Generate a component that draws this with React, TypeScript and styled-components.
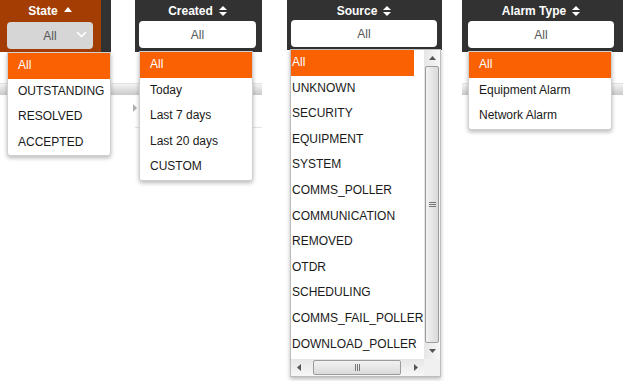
import styled, { createGlobalStyle } from 'styled-components';

const GlobalStyle = createGlobalStyle`
  html, body {
    margin: 0;
    padding: 0;
    background: #ffffff;
    font-family: "Liberation Sans", Arial, sans-serif;
  }
`;

const Page = styled.div`
  display: flex;
  align-items: flex-start;
  width: 623px;
  height: 381px;
  overflow: hidden;
`;

const Panel = styled.div<{ $width: number; $gap?: number }>`
  position: relative;
  flex: none;
  width: ${({ $width }) => $width}px;
  height: 381px;
  margin-left: ${({ $gap }) => $gap || 0}px;
`;

const Header = styled.div<{ $width?: number; $height: number }>`
  display: flex;
  width: ${({ $width }) => ($width ? `${$width}px` : '100%')};
  height: ${({ $height }) => $height}px;
  background: #323232;
`;

const HeaderCell = styled.div<{ $bg?: string; $width?: number; $padLeft: number; $padRight: number }>`
  display: flex;
  flex-direction: column;
  flex: ${({ $width }) => ($width ? 'none' : '1')};
  width: ${({ $width }) => ($width ? `${$width}px` : 'auto')};
  padding: 4px ${({ $padRight }) => $padRight}px 0 ${({ $padLeft }) => $padLeft}px;
  box-sizing: border-box;
  background: ${({ $bg }) => $bg || '#323232'};
`;

const Title = styled.div`
  display: flex;
  align-items: center;
  justify-content: center;
  gap: 6px;
  height: 14px;
  color: #ffffff;
  font-size: 12px;
  font-weight: 700;
  line-height: 14px;
`;

const SelectBox = styled.div<{ $grey?: boolean; $top: number }>`
  position: relative;
  display: flex;
  align-items: center;
  justify-content: center;
  height: 27px;
  margin-top: ${({ $top }) => $top}px;
  border-radius: 4px;
  background: ${({ $grey }) => ($grey ? '#d6d6d6' : '#ffffff')};
  color: #555555;
  font-size: 12px;
`;

const Chevron = styled.svg`
  position: absolute;
  right: 6px;
  top: 9px;
`;

const Band = styled.div`
  height: 11px;
  margin-top: 31px;
  background: linear-gradient(#f4f4f4, #c9c9c9);
  border-top: 1px solid #e2e2e2;
`;

const RowLine = styled.div`
  height: 1px;
  margin-top: 32px;
  background: #e4e4e4;
`;

const Expander = styled.div`
  position: absolute;
  left: -2px;
  top: 104px;
  width: 0;
  height: 0;
  border-top: 4px solid transparent;
  border-bottom: 4px solid transparent;
  border-left: 4px solid #b0b0b0;
`;

const Menu = styled.div<{ $left: number; $top: number; $width: number }>`
  position: absolute;
  left: ${({ $left }) => $left}px;
  top: ${({ $top }) => $top}px;
  width: ${({ $width }) => $width}px;
  box-sizing: border-box;
  background: #ffffff;
  border: 1px solid #d0d0d0;
  border-radius: 0 0 3px 3px;
  box-shadow: 0 2px 4px rgba(0, 0, 0, 0.28);
`;

const Item = styled.div<{ $active?: boolean; $pad: number; $width?: number }>`
  height: 25.6px;
  line-height: 25.6px;
  padding-left: ${({ $pad }) => $pad}px;
  width: ${({ $width }) => ($width ? `${$width}px` : 'auto')};
  box-sizing: border-box;
  white-space: nowrap;
  font-size: 12px;
  color: ${({ $active }) => ($active ? '#ffffff' : '#1a1a1a')};
  background: ${({ $active }) => ($active ? '#fa6103' : 'transparent')};
`;

const ListBox = styled.div`
  position: absolute;
  left: 3px;
  top: 49px;
  width: 151px;
  height: 328px;
  box-sizing: border-box;
  display: flex;
  flex-direction: column;
  background: #ffffff;
  border: 1px solid #bdbdbd;
  box-shadow: 0 2px 4px rgba(0, 0, 0, 0.28);
`;

const ListMain = styled.div`
  display: flex;
  flex: 1;
  min-height: 0;
`;

const Options = styled.div`
  flex: 1;
  overflow: hidden;
`;

const VScroll = styled.div`
  display: flex;
  flex-direction: column;
  width: 16px;
  background: linear-gradient(90deg, #e6e6e6, #f7f7f7);
`;

const HScroll = styled.div`
  display: flex;
  height: 17px;
  background: linear-gradient(#e6e6e6, #f7f7f7);
`;

const Arrow = styled.div`
  display: flex;
  align-items: center;
  justify-content: center;
  flex: none;
  width: 16px;
  height: 16px;
`;

const VThumb = styled.div`
  flex: 1;
  margin: 0 1px;
  display: flex;
  align-items: center;
  justify-content: center;
  border: 1px solid #9b9b9b;
  border-radius: 2px;
  background: linear-gradient(90deg, #f2f2f2, #dadada);
`;

const HThumb = styled.div`
  display: flex;
  align-items: center;
  justify-content: center;
  width: 86px;
  margin: 1px 0 1px 6px;
  border: 1px solid #9b9b9b;
  border-radius: 2px;
  background: linear-gradient(#f2f2f2, #dadada);
`;

const Spacer = styled.div`
  flex: 1;
`;

const Corner = styled.div`
  width: 16px;
  background: #f0f0f0;
`;

const SortBoth = () => (
  <svg width="8" height="10" viewBox="0 0 8 10">
    <path d="M0 4 L4 0 L8 4 Z M0 6 L8 6 L4 10 Z" fill="#ffffff" />
  </svg>
);

const SortUp = () => (
  <svg width="8" height="5" viewBox="0 0 8 5" style={{ marginTop: -3 }}>
    <path d="M0 5 L4 0 L8 5 Z" fill="#ffffff" />
  </svg>
);

const Tri = ({ dir }: { dir: 'up' | 'down' | 'left' | 'right' }) => {
  const d = {
    up: 'M0 4 L3.5 0 L7 4 Z',
    down: 'M0 0 L7 0 L3.5 4 Z',
    left: 'M4 0 L4 7 L0 3.5 Z',
    right: 'M0 0 L4 3.5 L0 7 Z',
  }[dir];
  const vertical = dir === 'up' || dir === 'down';
  return (
    <svg width={vertical ? 7 : 4} height={vertical ? 4 : 7} viewBox={vertical ? '0 0 7 4' : '0 0 4 7'}>
      <path d={d} fill="#555555" />
    </svg>
  );
};

const Grip = ({ horizontal }: { horizontal?: boolean }) => (
  <svg width="7" height="7" viewBox="0 0 7 7" style={horizontal ? { transform: 'rotate(90deg)' } : undefined}>
    <path d="M0 1.5 H7 M0 3.5 H7 M0 5.5 H7" stroke="#777777" strokeWidth="1" />
  </svg>
);

const sources = [
  'All', 'UNKNOWN', 'SECURITY', 'EQUIPMENT', 'SYSTEM', 'COMMS_POLLER', 'COMMUNICATION',
  'REMOVED', 'OTDR', 'SCHEDULING', 'COMMS_FAIL_POLLER', 'DOWNLOAD_POLLER',
];

export default function App() {
  return (
    <>
      <GlobalStyle />
      <Page>
        {/* State */}
        <Panel $width={135}>
          <Header $width={111} $height={52}>
            <HeaderCell $bg="#a43d03" $width={101} $padLeft={7} $padRight={8}>
              <Title>
                State <SortUp />
              </Title>
              <SelectBox $grey $top={4}>
                All
                <Chevron width="11" height="7" viewBox="0 0 11 7">
                  <path d="M1 1 L5.5 5.5 L10 1" fill="none" stroke="#ffffff" strokeWidth="1.6" />
                </Chevron>
              </SelectBox>
            </HeaderCell>
          </Header>
          <Band />
          <Menu $left={7} $top={52} $width={104}>
            {['All', 'OUTSTANDING', 'RESOLVED', 'ACCEPTED'].map((o, i) => (
              <Item key={o} $active={i === 0} $pad={10}>{o}</Item>
            ))}
          </Menu>
        </Panel>

        {/* Created */}
        <Panel $width={127}>
          <Header $height={52}>
            <HeaderCell $padLeft={4} $padRight={6}>
              <Title>
                Created <SortBoth />
              </Title>
              <SelectBox $top={3}>All</SelectBox>
            </HeaderCell>
          </Header>
          <Band />
          <RowLine />
          <Expander />
          <Menu $left={4} $top={51} $width={114}>
            {['All', 'Today', 'Last 7 days', 'Last 20 days', 'CUSTOM'].map((o, i) => (
              <Item key={o} $active={i === 0} $pad={10}>{o}</Item>
            ))}
          </Menu>
        </Panel>

        {/* Source */}
        <Panel $width={155} $gap={25}>
          <Header $height={50}>
            <HeaderCell $padLeft={4} $padRight={5}>
              <Title>
                Source <SortBoth />
              </Title>
              <SelectBox $top={2}>All</SelectBox>
            </HeaderCell>
          </Header>
          <ListBox>
            <ListMain>
              <Options>
                {sources.map((o, i) => (
                  <Item key={o} $active={i === 0} $pad={1} $width={123}>{o}</Item>
                ))}
              </Options>
              <VScroll>
                <Arrow><Tri dir="up" /></Arrow>
                <VThumb><Grip /></VThumb>
                <Arrow><Tri dir="down" /></Arrow>
              </VScroll>
            </ListMain>
            <HScroll>
              <Arrow><Tri dir="left" /></Arrow>
              <HThumb><Grip horizontal /></HThumb>
              <Spacer />
              <Arrow><Tri dir="right" /></Arrow>
              <Corner />
            </HScroll>
          </ListBox>
        </Panel>

        {/* Alarm Type */}
        <Panel $width={161} $gap={20}>
          <Header $height={52}>
            <HeaderCell $padLeft={6} $padRight={9}>
              <Title>
                Alarm Type <SortBoth />
              </Title>
              <SelectBox $top={3}>All</SelectBox>
            </HeaderCell>
          </Header>
          <Band />
          <Menu $left={6} $top={51} $width={144}>
            {['All', 'Equipment Alarm', 'Network Alarm'].map((o, i) => (
              <Item key={o} $active={i === 0} $pad={10}>{o}</Item>
            ))}
          </Menu>
        </Panel>
      </Page>
    </>
  );
}
